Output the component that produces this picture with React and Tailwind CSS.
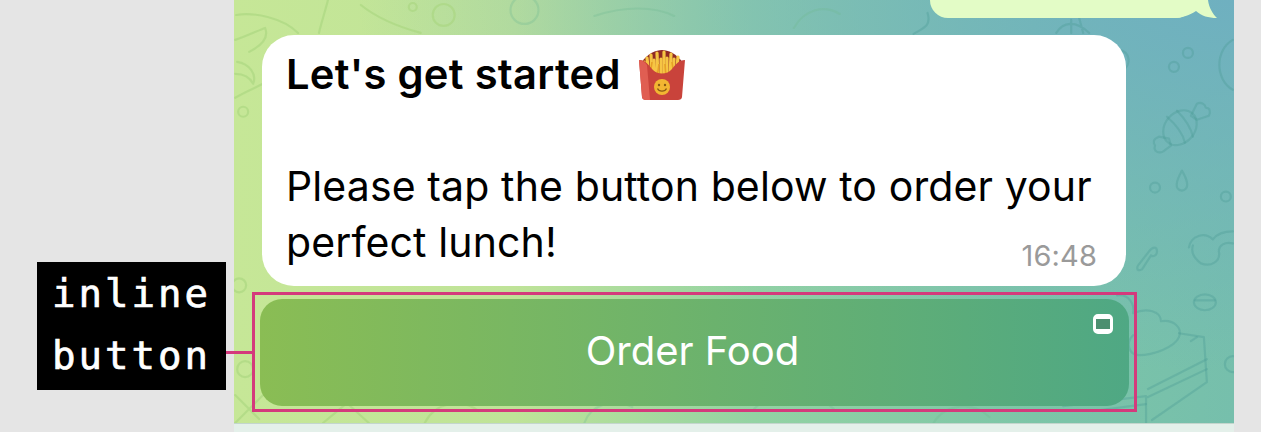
import React from 'react'

// Faint line drawings on the chat wallpaper
const Wallpaper = () => (
  <svg className="absolute inset-0 h-full w-full" viewBox="0 0 1000 424" fill="none" strokeWidth="2.2" strokeLinecap="round" strokeLinejoin="round">
    {/* left side, green on green */}
    <g stroke="#a9d67f" strokeOpacity="0.6">
      <path d="M1 15C20 12 48 18 63 33" />
      <path d="M0 40C12 36 24 30 30 28C34 38 26 46 14 52" />
      <path d="M2 62C14 64 22 74 18 84C14 76 8 74 0 74" />
      <path d="M0 98C10 92 20 88 28 84" />
      <circle cx="8" cy="112" r="5" />
      <path d="M93 0C90 12 86 24 84 33" />
      <path d="M126 5C142 18 164 27 186 33" />
      <circle cx="178" cy="7" r="4" />
      <circle cx="209" cy="15" r="11" />
      <circle cx="10" cy="370" r="8" />
      <circle cx="4" cy="286" r="7" />
      <path d="M0 396L14 410L0 424M14 410L28 396M14 410L24 420" />
      <path d="M88 424L112 404L134 424M112 404L112 392" />
      <path d="M190 424C200 404 226 398 244 412" />
    </g>
    {/* middle, slightly darker */}
    <g stroke="#6fb892" strokeOpacity="0.3">
      <circle cx="290" cy="10" r="14" />
      <path d="M360 16C390 6 420 6 440 16" />
      <path d="M560 28C570 10 590 4 606 14" />
      <path d="M520 410C540 390 580 390 600 410" />
      <path d="M350 424C356 406 380 398 398 408" />
      <path d="M700 424C712 404 740 402 756 418" />
    </g>
    {/* right side, blue-green */}
    <g stroke="#4b9a95" strokeOpacity="0.35">
      <path d="M680 34C690 28 698 26 694 13" />
      <path d="M823 33C830 22 842 20 856 33M838 20V33M846 18L850 33" />
      <path d="M886 50C898 52 898 66 890 70" />
      <circle cx="955" cy="53" r="5" />
      <circle cx="941" cy="67" r="5" />
      <circle cx="922" cy="188" r="5" />
      <circle cx="993" cy="197" r="5" />
      <path d="M949 171C943 182 941 190 949 191C957 190 955 181 949 171Z" />
      <path d="M1000 40C982 50 982 80 1000 90" />
      {/* candy */}
      <ellipse cx="947" cy="128" rx="15" ry="19" transform="rotate(40 947 128)" />
      <path d="M934 117C942 124 950 134 952 143M944 111C951 118 958 128 960 137" />
      <path d="M958 116L964 104C968 102 972 104 973 108C977 108 978 112 976 116L964 120Z" />
      <path d="M936 139L926 137C920 139 920 143 922 146C920 152 926 154 930 152L938 146Z" />
      {/* small sprig and bone by the bubble */}
      <path d="M905 266L916 252C920 247 924 247 924 252C924 256 920 258 918 256L909 270C905 272 903 270 905 266Z" />
      <path d="M956 248C958 236 972 232 980 240C986 232 998 232 1000 232M968 264C960 258 958 252 960 246M968 264C978 268 988 262 986 252C986 246 992 242 1000 244" />
      <ellipse cx="972" cy="303" rx="11" ry="8" />
      <path d="M962 301L982 301" />
      <circle cx="1000" cy="365" r="8" />
      {/* cake slice */}
      <path d="M884 296C896 294 902 306 900 314C914 308 928 312 928 322C940 320 950 328 946 338C942 348 920 356 906 356C896 356 892 344 900 336" />
      <path d="M946 334L971 338L974 383L919 421" />
      <path d="M915 390L974 360M915 398L974 370" />
      <path d="M958 342L964 338" />
      <path d="M830 407L913 397V424" />
      <path d="M860 412L913 405" />
    </g>
  </svg>
)

const fries = [
  'M8 30L6 14', 'M11 30L9 10', 'M14 30L13 7', 'M17 32L16 12', 'M20 32L19 5', 'M23 32L23 11',
  'M26 32L26 4', 'M29 32L29 10', 'M32 32L33 6', 'M35 30L36 11', 'M38 30L40 9', 'M41 28L43 15'
]

// The fries box emoji
const Fries = () => (
  <svg width="48" height="53" viewBox="0 0 48 53">
    <path d="M3 15C10 5 18 2 24 2C30 2 38 5 45 15L40 28H8Z" fill="#8f2a24" />
    {fries.map(d => (
      <path key={d} d={d} stroke="#f6c544" strokeWidth="3.2" strokeLinecap="round" />
    ))}
    <path d="M12 28L14 14M19 30L21 16M28 30L27 16M36 28L34 14" stroke="#e6a027" strokeWidth="1.6" />
    <path d="M1 12C7 12 11 17 14 21C19 27 29 27 34 21C37 17 41 12 47 12L44 49C44 51 42 52 40 52H8C6 52 4 51 4 49Z" fill="#c9433b" />
    <path d="M1 12L4 49C4 51 6 52 8 52H12L9 17C7 14 4 12 1 12Z" fill="#e05e52" />
    <circle cx="24" cy="39" r="8" fill="#f2b632" />
    <circle cx="21" cy="37" r="1.2" fill="#8a5a14" />
    <circle cx="27" cy="37" r="1.2" fill="#8a5a14" />
    <path d="M19.5 40.5C21 44 27 44 28.5 40.5" stroke="#8a5a14" strokeWidth="1.3" fill="none" />
  </svg>
)

const OutgoingBubble = () => (
  <div className="relative ml-[696px] h-[18px] w-[264px] rounded-b-[18px] bg-[#e3fcc6]">
    <svg className="absolute left-[240px] top-0" width="48" height="18" viewBox="0 0 48 18">
      <path d="M0 0H38C39 8 43 14 47 18C38 18 32 16 26 11C20 15 12 18 4 18H0Z" fill="#e3fcc6" />
    </svg>
  </div>
)

const MessageBubble = () => (
  <div className="relative ml-[28px] mt-[17px] h-[251px] w-[864px] rounded-[32px] bg-white pl-[24px] pt-[11px] text-[41px] leading-[56px] tracking-[0.12px] text-black">
    <p className="flex items-center gap-[17px] text-[41.7px] font-semibold tracking-[0.3px]">
      Let's get started
      <Fries />
    </p>
    <p className="mt-[56px]">
      Please tap the button below to order your
      <br />
      perfect lunch!
    </p>
    <span className="absolute bottom-[15px] right-[29px] text-[29px] leading-[30px] text-[#9a9a9a]">16:48</span>
  </div>
)

const InlineButton = () => (
  <div className="ml-[18px] mt-[6px] h-[120px] w-[885px] border-[3px] border-[#d43a7c] pb-[3px] pl-[5px] pr-[5px] pt-[4px]">
    <div className="relative flex h-full items-center justify-center rounded-[22px] bg-[linear-gradient(90deg,#8abd54,#4fa884)] pb-[4px] pr-[4px] text-[40px] text-white">
      Order Food
      <span className="absolute right-[16px] top-[15px] h-[20px] w-[20px] rounded-[5px] border-x-[3.5px] border-y-[5px] border-white bg-[#4d8f70]" />
    </div>
  </div>
)

// Black label in the left margin with its line to the button
const Callout = () => (
  <div className="relative z-10 flex w-[234px] shrink-0 items-start pl-[37px] pt-[262px]">
    <div className="flex h-[128px] w-[189px] shrink-0 flex-col items-center justify-center bg-black pb-[2px] font-['DejaVu_Sans_Mono',monospace] text-[39px] leading-[62px] tracking-[3px] text-white [-webkit-text-stroke:0.7px_white]">
      <span>inline</span>
      <span>button</span>
    </div>
    <div className="mt-[89px] h-[3px] w-[26px] shrink-0 bg-[#d43a7c]" />
  </div>
)

export default function App() {
  return (
    <div className="flex h-[432px] w-[1261px] overflow-hidden bg-[#e5e5e5] font-['Inter',sans-serif]">
      <Callout />
      <div className="flex h-[432px] w-[1000px] flex-col">
        <div className="relative h-[423px] overflow-hidden bg-[linear-gradient(90deg,#c6e797_0%,#bfe398_28%,#93d3a3_52%,#7cc5a7_80%,#76bfac_100%)] shadow-[0_1px_0_#c3d6cd]">
          <div className="absolute inset-0 bg-[radial-gradient(ellipse_at_100%_0%,#6fb0c0_0%,#6fb0c000_62%)]" />
          <Wallpaper />
          <div className="relative">
            <OutgoingBubble />
            <MessageBubble />
            <InlineButton />
          </div>
        </div>
        <div className="flex-1 bg-[#e4f0ea]" />
      </div>
    </div>
  )
}
